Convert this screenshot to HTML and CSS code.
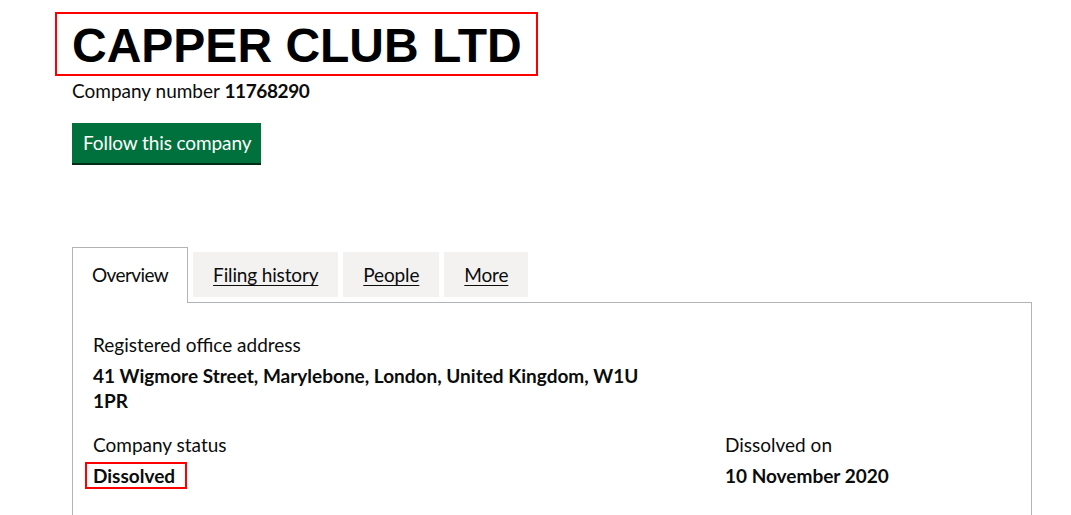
FILE: index.html
```html
<!DOCTYPE html>
<html lang="en">
<head>
<meta charset="utf-8">
<title>CAPPER CLUB LTD overview - Find and update company information - GOV.UK</title>
<link rel="stylesheet" href="styles.css">
</head>
<body>
<main class="page">
  <div class="company-header">
    <h1 class="heading-xl"><span class="highlight-title">CAPPER CLUB LTD</span></h1>
    <p class="company-number">Company number <strong>11768290</strong></p>
    <a class="button" href="#">Follow this company</a>
  </div>

  <div class="tabs">
    <ul class="tabs-list">
      <li class="tab tab-selected"><span class="tab-label">Overview</span></li>
      <li class="tab"><a class="tab-link" href="#">Filing history</a></li>
      <li class="tab"><a class="tab-link" href="#">People</a></li>
      <li class="tab"><a class="tab-link" href="#">More</a></li>
    </ul>
    <section class="tab-panel">
      <dl class="summary">
        <dt class="label">Registered office address</dt>
        <dd class="value address">41 Wigmore Street, Marylebone, London, United Kingdom, W1U 1PR</dd>
      </dl>
      <div class="status-grid">
        <dl class="summary">
          <dt class="label">Company status</dt>
          <dd class="value"><span class="highlight-status">Dissolved</span></dd>
        </dl>
        <dl class="summary">
          <dt class="label">Dissolved on</dt>
          <dd class="value">10 November 2020</dd>
        </dl>
      </div>
    </section>
  </div>
</main>
</body>
</html>
```

FILE: styles.css
```css
html, body {
  margin: 0;
  padding: 0;
  background: #ffffff;
}

body {
  font-family: "Lato", "Noto Sans", Arial, sans-serif;
  color: #0b0c0c;
  font-size: 19px;
  line-height: 25px;
}

.page {
  padding: 12px 0 0 72px;
}

.company-header {
  height: 235px;
}

.heading-xl {
  margin: 0 0 0 -17px;
  font-size: 48px;
  line-height: 56px;
}

.highlight-title {
  display: inline-block;
  font-family: "Liberation Sans", Arial, sans-serif;
  font-weight: 700;
  border: 2px solid #ff0000;
  padding: 4px 14px 0 15px;
  color: #000000;
}

.company-number {
  margin: 2px 0 0 0;
  font-size: 19px;
  line-height: 25px;
}

.company-number strong {
  font-weight: 700;
  letter-spacing: -0.4px;
}

.button {
  display: inline-block;
  margin-top: 20px;
  background: #00703c;
  color: #ffffff;
  text-decoration: none;
  font-size: 19px;
  line-height: 24px;
  padding: 8px 10px 8px 11px;
  letter-spacing: -0.1px;
  box-shadow: 0 2px 0 #002d18;
}

.tabs-list {
  list-style: none;
  margin: 0;
  padding: 0;
  display: flex;
  align-items: flex-start;
  gap: 5px;
}

.tab {
  margin-top: 5px;
  padding: 10px 20px;
  background: #f3f2f1;
}

.tab-link {
  color: #0b0c0c;
  text-decoration: underline;
  text-decoration-thickness: 1px;
  text-underline-offset: 3px;
  letter-spacing: -0.15px;
}

.tab-selected {
  margin-top: 0;
  margin-bottom: -1px;
  padding: 14px 19px 16px 19px;
  background: #ffffff;
  border: 1px solid #b1b4b6;
  border-bottom: 0;
  position: relative;
  z-index: 1;
}

.tab-label {
  letter-spacing: -0.6px;
}

.tab-panel {
  width: 960px;
  box-sizing: border-box;
  height: 240px;
  border: 1px solid #b1b4b6;
  padding: 29px 20px 0 20px;
}

.summary {
  margin: 0;
}

.label {
  margin: 0 0 6px 0;
}

.value {
  margin: 0;
  font-weight: 700;
}

.address {
  max-width: 555px;
}

.status-grid {
  display: grid;
  grid-template-columns: 632px 1fr;
  margin-top: 19px;
}

.highlight-status {
  outline: 2px solid #ff0000;
  padding: 0 10px 0 6px;
  margin-left: -6px;
}
```
